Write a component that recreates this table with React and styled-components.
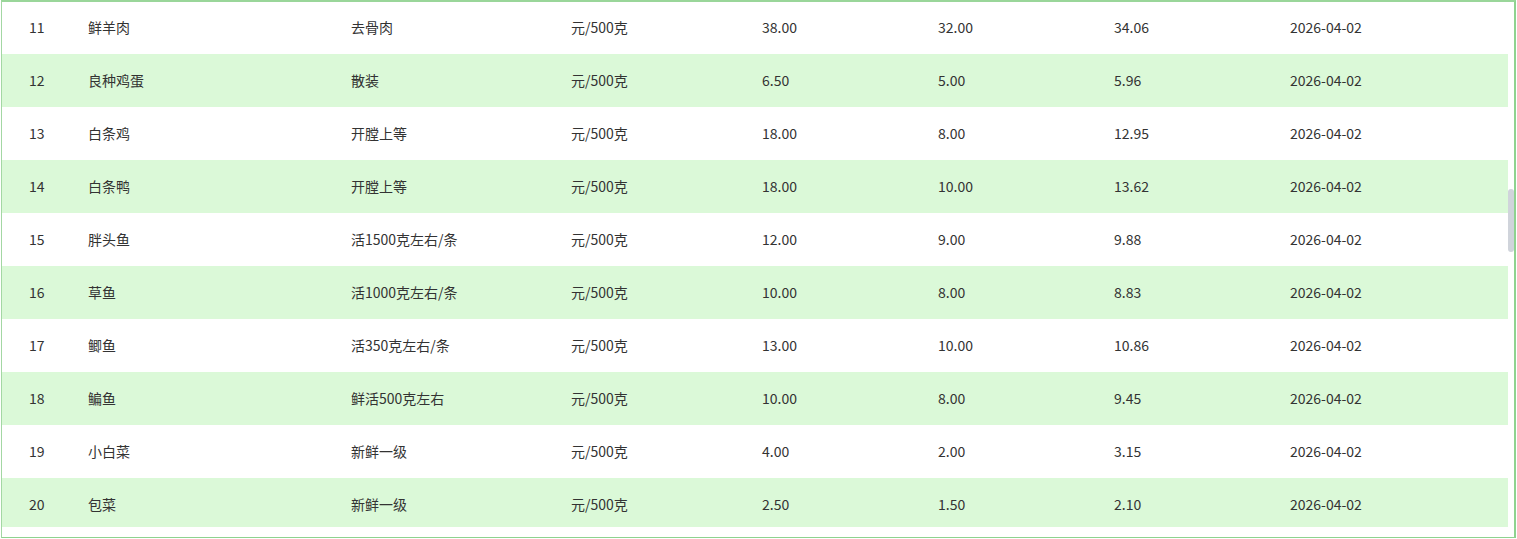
import styled, { createGlobalStyle } from "styled-components";

const GlobalStyle = createGlobalStyle`
  html, body {
    margin: 0;
    padding: 0;
    background: #ffffff;
  }
  body {
    font-family: "Noto Sans CJK SC", "Noto Sans", sans-serif;
  }
`;

const rows = [
  ["11", "鲜羊肉", "去骨肉", "元/500克", "38.00", "32.00", "34.06", "2026-04-02"],
  ["12", "良种鸡蛋", "散装", "元/500克", "6.50", "5.00", "5.96", "2026-04-02"],
  ["13", "白条鸡", "开膛上等", "元/500克", "18.00", "8.00", "12.95", "2026-04-02"],
  ["14", "白条鸭", "开膛上等", "元/500克", "18.00", "10.00", "13.62", "2026-04-02"],
  ["15", "胖头鱼", "活1500克左右/条", "元/500克", "12.00", "9.00", "9.88", "2026-04-02"],
  ["16", "草鱼", "活1000克左右/条", "元/500克", "10.00", "8.00", "8.83", "2026-04-02"],
  ["17", "鲫鱼", "活350克左右/条", "元/500克", "13.00", "10.00", "10.86", "2026-04-02"],
  ["18", "鳊鱼", "鲜活500克左右", "元/500克", "10.00", "8.00", "9.45", "2026-04-02"],
  ["19", "小白菜", "新鲜一级", "元/500克", "4.00", "2.00", "3.15", "2026-04-02"],
  ["20", "包菜", "新鲜一级", "元/500克", "2.50", "1.50", "2.10", "2026-04-02"],
];

export default function App() {
  return (
    <>
      <GlobalStyle />
      <StyledPanel>
        <StyledTable>
          {rows.map((row, i) => (
            <StyledRow key={row[0]} $striped={i % 2 === 1} $first={i === 0}>
              {row.map((cell, j) => (
                <StyledCell key={j}>{cell}</StyledCell>
              ))}
            </StyledRow>
          ))}
        </StyledTable>
        <StyledScrollTrack>
          <StyledScrollThumb />
        </StyledScrollTrack>
      </StyledPanel>
    </>
  );
}

const StyledPanel = styled.div`
  position: relative;
  display: flex;
  box-sizing: border-box;
  margin-left: 1px;
  width: 1515px;
  height: 538px;
  padding-bottom: 10px;
  border: 1px solid #8fd28f;
  border-top: 2px solid #9ad69a;
  border-right: 2px solid #8fd28f;
  border-left-color: #a3d7a3;
`;

const StyledTable = styled.div`
  flex: 1;
  display: flex;
  flex-direction: column;
  overflow: hidden;
`;

const StyledRow = styled.div`
  display: grid;
  flex-shrink: 0;
  grid-template-columns: 59px 263px 220px 191px 176px 176px 176px 1fr;
  align-items: center;
  height: ${(p) => (p.$first ? "52px" : "53px")};
  padding-left: 27px;
  padding-bottom: 2px;
  box-sizing: border-box;
  background: ${(p) => (p.$striped ? "#dbf9d8" : "#ffffff")};
  color: #333333;
  font-size: 14px;
`;

const StyledCell = styled.div`
  white-space: nowrap;
  line-height: 20px;
`;

const StyledScrollTrack = styled.div`
  position: relative;
  width: 6px;
  flex-shrink: 0;
`;

const StyledScrollThumb = styled.div`
  position: absolute;
  top: 187px;
  left: 0;
  width: 6px;
  height: 63px;
  border-radius: 3px;
  background: #d0d4db;
`;
